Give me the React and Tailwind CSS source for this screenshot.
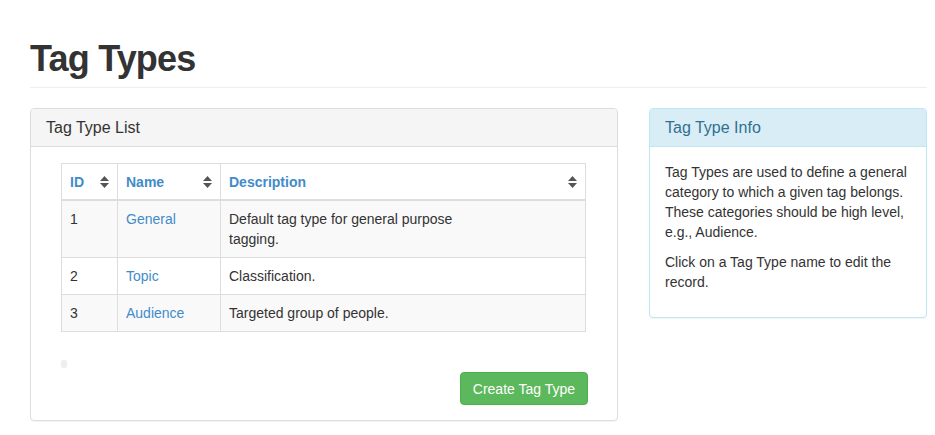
const ROWS = [
  { id: 1, name: 'General', description: 'Default tag type for general purpose tagging.' },
  { id: 2, name: 'Topic', description: 'Classification.' },
  { id: 3, name: 'Audience', description: 'Targeted group of people.' },
]

function SortIcon() {
  return (
    <svg width="9" height="12" viewBox="0 0 9 12" className="shrink-0">
      <path d="M0 5 L4.5 0 L9 5 Z" fill="#555" />
      <path d="M0 7 L9 7 L4.5 12 Z" fill="#555" />
    </svg>
  )
}

function HeadCell({ label, className = '' }) {
  return (
    <th className={`border border-[#ddd] border-b-2 px-2 pt-2 pb-[7px] text-left font-bold ${className}`}>
      <div className="flex items-center justify-between">
        <span className="text-[#428bca]">{label}</span>
        <SortIcon />
      </div>
    </th>
  )
}

export default function App() {
  return (
    <div
      className="min-h-[435px] bg-white text-[#333] text-[14px] leading-[20px] pl-[30px] pr-[8px]"
      style={{ fontFamily: '"Liberation Sans", Arial, sans-serif' }}
    >
      {/* Page header */}
      <div className="pt-[39px] pb-[8px] border-b border-[#eee] mb-[20px]">
        <h1 className="text-[36px] leading-[40px] font-bold tracking-[-0.8px] text-[#333]">Tag Types</h1>
      </div>

      <div className="flex gap-[31px] items-start">
        {/* Tag Type List */}
        <div className="w-[588px] border border-[#ddd] rounded-[4px] shadow-[0_1px_1px_rgba(0,0,0,0.05)]">
          <div className="bg-[#f5f5f5] border-b border-[#ddd] rounded-t-[3px] px-[15px] py-[10px] text-[16px] leading-[17px]">
            Tag Type List
          </div>
          <div className="pt-[16px] pb-[15px] pl-[30px] pr-[29px]">
            <div className="pr-[2px]">
              <table className="w-full border-collapse">
                <thead>
                  <tr>
                    <HeadCell label="ID" className="w-[56px]" />
                    <HeadCell label="Name" className="w-[103px]" />
                    <HeadCell label="Description" />
                  </tr>
                </thead>
                <tbody>
                  {ROWS.map((r, i) => (
                    <tr key={r.id} className={i % 2 === 0 ? 'bg-[#f9f9f9]' : 'bg-white'}>
                      <td className="border border-[#ddd] px-2 py-2 align-top">{r.id}</td>
                      <td className="border border-[#ddd] px-2 py-2 align-top">
                        <a href="#" className="text-[#428bca]">{r.name}</a>
                      </td>
                      <td className="border border-[#ddd] px-2 py-2 align-top">
                        <span className="block max-w-[250px]">{r.description}</span>
                      </td>
                    </tr>
                  ))}
                </tbody>
              </table>
            </div>

            <div className="mt-[28px] w-[6px] h-[8px] rounded-[2px] bg-[#eee]" />

            <div className="flex justify-end mt-[4px]">
              <button className="h-[33px] px-[12px] bg-[#5cb85c] border border-[#4cae4c] rounded-[4px] text-white text-[14px] leading-[20px]">
                Create Tag Type
              </button>
            </div>
          </div>
        </div>

        {/* Tag Type Info */}
        <div className="w-[278px] border border-[#bce8f1] rounded-[4px] shadow-[0_1px_1px_rgba(0,0,0,0.05)]">
          <div className="bg-[#d9edf7] border-b border-[#bce8f1] rounded-t-[3px] px-[15px] py-[10px] text-[16px] leading-[17px] text-[#31708f]">
            Tag Type Info
          </div>
          <div className="px-[15px] pt-[15px] pb-[15px]">
            <p className="mb-[10px]">
              Tag Types are used to define a general category to which a given tag belongs. These categories should be high level, e.g., Audience.
            </p>
            <p className="mb-[10px]">Click on a Tag Type name to edit the record.</p>
          </div>
        </div>
      </div>
    </div>
  )
}
